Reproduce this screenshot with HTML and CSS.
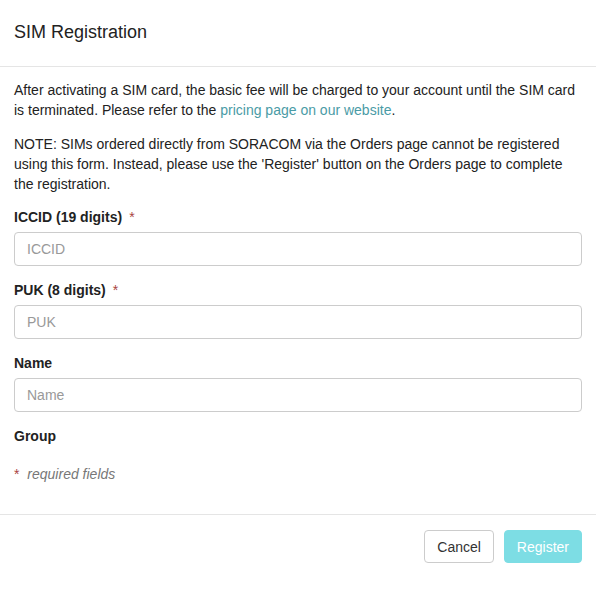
FILE: index.html
```
<!doctype html>
<html lang="en">
<head>
	<meta charset="UTF-8">
	<title>SIM Registration</title>
	<link rel="stylesheet" href="styles.css">
</head>
<body>
	<div class="modal">
		<div class="modal-header">
			<h4 class="modal-title">SIM Registration</h4>
		</div>
		<div class="modal-body">
			<p>After activating a SIM card, the basic fee will be charged to your account until the SIM card is terminated. Please refer to the <a href="#">pricing page on our website</a>.</p>
			<p class="note">NOTE: SIMs ordered directly from SORACOM via the Orders page cannot be registered using this form. Instead, please use the 'Register' button on the Orders page to complete the registration.</p>
			<div class="form-group">
				<label class="required">ICCID (19 digits)</label>
				<input type="text" class="form-control" placeholder="ICCID">
			</div>
			<div class="form-group">
				<label class="required">PUK (8 digits)</label>
				<input type="text" class="form-control" placeholder="PUK">
			</div>
			<div class="form-group">
				<label>Name</label>
				<input type="text" class="form-control" placeholder="Name">
			</div>
			<div class="form-group group-field">
				<label>Group</label>
			</div>
			<p class="help"><span class="star">*</span> <em>required fields</em></p>
		</div>
		<div class="modal-footer">
			<button class="btn btn-default">Cancel</button>
			<button class="btn btn-primary" disabled>Register</button>
		</div>
	</div>
</body>
</html>
```

FILE: styles.css
```
*{
	box-sizing: border-box;
}
body{
	margin:0;
	background:#fff;
	font:14px/20px "Liberation Sans", Arial, sans-serif;
	color:#222;
}
.modal{
	width:596px;
}
.modal-header{
	padding:20px 14px 21px;
	border-bottom:1px solid #e5e5e5;
}
.modal-title{
	margin:0;
	font-size:18px;
	font-weight:normal;
	line-height:25px;
	color:#222;
}
.modal-body{
	padding:13px 14px 13px;
}
.modal-body p{
	margin:0 0 14px;
}
.modal-body p.note{
	margin-bottom:13px;
}
a{
	color:#4a9ba6;
	text-decoration:none;
}
.form-group{
	margin-bottom:14px;
}
.group-field{
	margin-bottom:18px;
}
label{
	display:block;
	font-weight:bold;
	margin-bottom:5px;
}
label.required:after{
	content:"*";
	color:#a94442;
	margin-left:7px;
	font-weight:normal;
}
.form-control{
	display:block;
	width:100%;
	height:34px;
	padding:6px 12px;
	font:14px "Liberation Sans", Arial, sans-serif;
	color:#555;
	border:1px solid #ccc;
	border-radius:4px;
	background:#fff;
}
.form-control::placeholder{
	color:#999;
}
.modal-body p.help{
	margin:0 0 17px;
	color:#777;
}
.star{
	color:#a94442;
	margin-right:4px;
}
.modal-footer{
	padding:15px 14px;
	border-top:1px solid #e5e5e5;
	display:flex;
	justify-content:flex-end;
	gap:10px;
}
.btn{
	height:33px;
	padding:6px 12px;
	font:14px/20px "Liberation Sans", Arial, sans-serif;
	border:1px solid transparent;
	border-radius:4px;
	cursor:pointer;
}
.btn-default{
	background:#fff;
	border-color:#ccc;
	color:#333;
}
.btn-primary{
	background:#7ddde4;
	border-color:#7ddde4;
	color:#fff;
}
```
